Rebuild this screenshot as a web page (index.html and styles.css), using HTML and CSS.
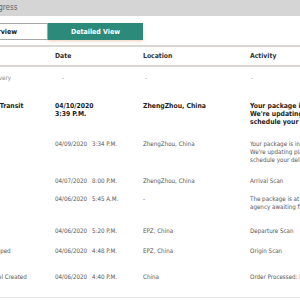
FILE: index.html
```html
<!DOCTYPE html>
<html>
<head>
<meta charset="utf-8">
<link rel="stylesheet" href="styles.css">
</head>
<body>
<div class="page">
  <div class="titlebar"><span class="title">Shipment Progress</span></div>
  <div class="tabs">
    <div class="tab tab-off">Overview</div>
    <div class="tab tab-on">Detailed View</div>
  </div>
  <div class="table">
    <div class="row head">
      <div></div><div>Date</div><div>Location</div><div>Activity</div>
    </div>
    <div class="row empty r1">
      <div class="status">Delivery</div><div class="dash">-</div><div class="dash">-</div><div class="dash">-</div>
    </div>
    <div class="row strong r2">
      <div class="status">In Transit</div>
      <div>04/10/2020<br>3:39 P.M.</div>
      <div>ZhengZhou, China</div>
      <div>Your package is in transit.<br>We're updating plans to<br>schedule your delivery.</div>
    </div>
    <div class="row r3">
      <div></div>
      <div>04/09/2020<span class="time">3:34 P.M.</span></div>
      <div>ZhengZhou, China</div>
      <div>Your package is in transit.<br>We're updating plans to<br>schedule your delivery.</div>
    </div>
    <div class="row r4">
      <div></div>
      <div>04/07/2020<span class="time">8:00 P.M.</span></div>
      <div>ZhengZhou, China</div>
      <div>Arrival Scan</div>
    </div>
    <div class="row r5">
      <div></div>
      <div>04/06/2020<span class="time">5:45 A.M.</span></div>
      <div>-</div>
      <div>The package is at the clearing<br>agency awaiting final release.</div>
    </div>
    <div class="row r6">
      <div></div>
      <div>04/06/2020<span class="time">5:20 P.M.</span></div>
      <div>EPZ, China</div>
      <div>Departure Scan</div>
    </div>
    <div class="row r7">
      <div class="status">Shipped</div>
      <div>04/06/2020<span class="time">4:48 P.M.</span></div>
      <div>EPZ, China</div>
      <div>Origin Scan</div>
    </div>
    <div class="row r8">
      <div class="status">Label Created</div>
      <div>04/06/2020<span class="time">4:40 P.M.</span></div>
      <div>China</div>
      <div>Order Processed: Ready for UPS</div>
    </div>
  </div>
</div>
</body>
</html>
```

FILE: styles.css
```css
html, body {
  margin: 0;
  padding: 0;
  background: #ffffff;
  overflow: hidden;
}
body {
  font-family: "DejaVu Sans Condensed", "DejaVu Sans", sans-serif;
  font-size: 6.2px;
  color: #555;
}
.page {
  margin-left: -14px;
  width: 460px;
}
.titlebar {
  background: #d5d5d5;
  height: 16px;
  line-height: 16px;
  font-size: 8px;
  color: #666;
  overflow: hidden;
}
.title {
  margin-left: -36px;
}
.tabs {
  display: flex;
  margin: 7px 0 0 -33px;
}
.tab {
  width: 95px;
  height: 17px;
  box-sizing: border-box;
  display: flex;
  align-items: center;
  justify-content: center;
  font-weight: bold;
  font-size: 7px;
}
.tab-off {
  background: #fff;
  border: 1px solid #a8a8a8;
  color: #222;
}
.tab-on {
  background: #2b8a79;
  color: #fff;
  box-shadow: 0 1px 3px rgba(210, 140, 90, 0.45);
}
.table {
  margin-top: 5px;
  border-top: 2px solid #dad6d2;
  border-bottom: 1px solid #e2e2e2;
}
.row {
  display: grid;
  grid-template-columns: 69px 88px 107px 1fr;
  line-height: 8px;
  padding-top: 7px;
  white-space: nowrap;
}
.status { padding-left: 2px; }
.strong .status { padding-left: 5px; }
.row.head {
  padding: 5px 0 5px;
  font-weight: bold;
  color: #333;
  font-size: 6.8px;
  border-bottom: 2px solid #dad6d2;
}
.empty { color: #888; }
.dash { padding-left: 7px; }
.empty .dash:nth-child(3) { padding-left: 2px; }
.empty .dash:nth-child(4) { padding-left: 1px; }
.strong {
  font-weight: bold;
  font-size: 6.8px;
  color: #222;
}
.time { margin-left: 5px; }
.r1 { padding-bottom: 11px; }
.r2 { padding-top: 9px; padding-bottom: 7px; }
.r3 { padding-bottom: 6px; }
.r4 { padding-bottom: 3px; }
.r5 { padding-bottom: 9px; }
.r6 { padding-bottom: 5px; }
.r7 { padding-bottom: 11px; }
.r8 { padding-bottom: 16px; }
```
